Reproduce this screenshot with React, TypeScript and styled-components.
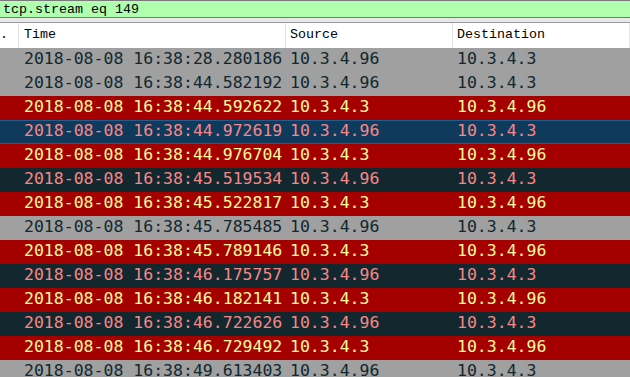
import React from "react";
import styled, { createGlobalStyle } from "styled-components";

const Global = createGlobalStyle`
  html, body { margin: 0; padding: 0; background: #ffffff; overflow: hidden; }
  #root { width: 630px; height: 377px; overflow: hidden; }
`;

const Page = styled.div`
  width: 630px;
  height: 377px;
  display: flex;
  flex-direction: column;
  overflow: hidden;
  background: #ffffff;
`;

const FilterBar = styled.div`
  height: 16px;
  border-top: 1px solid #7a7a7a;
  border-bottom: 1px solid #7a7a7a;
  background: #afffaf;
  display: flex;
  align-items: center;
  padding-left: 3px;
  font-family: "Liberation Mono", monospace;
  font-size: 13.33px;
  color: #000000;
  flex-shrink: 0;
`;

const Spacer = styled.div`
  height: 4px;
  background: #e8e8e8;
  border-bottom: 1px solid #9a9a9a;
  flex-shrink: 0;
`;

const Grid = styled.div`
  display: grid;
  grid-template-columns: 19px 267px 167px 1fr;
`;

const HeaderRow = styled(Grid)`
  height: 25px;
  background: #ffffff;
  font-family: "Liberation Mono", monospace;
  font-size: 13.33px;
  color: #000000;
  flex-shrink: 0;
`;

const HeadCell = styled.div<{ $pad: number }>`
  display: flex;
  align-items: center;
  padding-left: ${(p) => p.$pad}px;
  border-right: 1px solid #e3e3e3;
  overflow: hidden;
  white-space: nowrap;
  padding-bottom: 2px;
`;

type Kind = "gray" | "red" | "dark" | "sel";

const palette: Record<Kind, { bg: string; fg: string }> = {
  gray: { bg: "#a0a0a0", fg: "#12272e" },
  red: { bg: "#a40000", fg: "#fffc9c" },
  dark: { bg: "#12272e", fg: "#f78787" },
  sel: { bg: "#0f3a5b", fg: "#f78787" },
};

const Row = styled(Grid)<{ $kind: Kind }>`
  height: 24px;
  box-sizing: border-box;
  background: ${(p) => palette[p.$kind].bg};
  color: ${(p) => palette[p.$kind].fg};
  font-family: "DejaVu Sans Mono", monospace;
  font-size: 16.5px;
  flex-shrink: 0;
  ${(p) =>
    p.$kind === "sel"
      ? "border-top: 1px solid #1f5f8f; border-bottom: 1px solid #1f5f8f;"
      : ""}
`;

const Cell = styled.div<{ $pad: number }>`
  display: flex;
  align-items: center;
  padding-left: ${(p) => p.$pad}px;
  padding-bottom: 3px;
  white-space: nowrap;
  overflow: hidden;
`;

const rows: [Kind, string, string, string][] = [
  ["gray", "28.280186", "10.3.4.96", "10.3.4.3"],
  ["gray", "44.582192", "10.3.4.96", "10.3.4.3"],
  ["red", "44.592622", "10.3.4.3", "10.3.4.96"],
  ["sel", "44.972619", "10.3.4.96", "10.3.4.3"],
  ["red", "44.976704", "10.3.4.3", "10.3.4.96"],
  ["dark", "45.519534", "10.3.4.96", "10.3.4.3"],
  ["red", "45.522817", "10.3.4.3", "10.3.4.96"],
  ["gray", "45.785485", "10.3.4.96", "10.3.4.3"],
  ["red", "45.789146", "10.3.4.3", "10.3.4.96"],
  ["dark", "46.175757", "10.3.4.96", "10.3.4.3"],
  ["red", "46.182141", "10.3.4.3", "10.3.4.96"],
  ["dark", "46.722626", "10.3.4.96", "10.3.4.3"],
  ["red", "46.729492", "10.3.4.3", "10.3.4.96"],
  ["gray", "49.613403", "10.3.4.96", "10.3.4.3"],
];

export default function App() {
  return (
    <Page>
      <Global />
      <FilterBar>tcp.stream eq 149</FilterBar>
      <Spacer />
      <HeaderRow>
        <HeadCell $pad={0}>.</HeadCell>
        <HeadCell $pad={5}>Time</HeadCell>
        <HeadCell $pad={4}>Source</HeadCell>
        <HeadCell $pad={4}>Destination</HeadCell>
      </HeaderRow>
      {rows.map(([kind, t, src, dst], i) => (
        <Row key={i} $kind={kind}>
          <Cell $pad={0} />
          <Cell $pad={5}>2018-08-08 16:38:{t}</Cell>
          <Cell $pad={4}>{src}</Cell>
          <Cell $pad={4}>{dst}</Cell>
        </Row>
      ))}
    </Page>
  );
}
